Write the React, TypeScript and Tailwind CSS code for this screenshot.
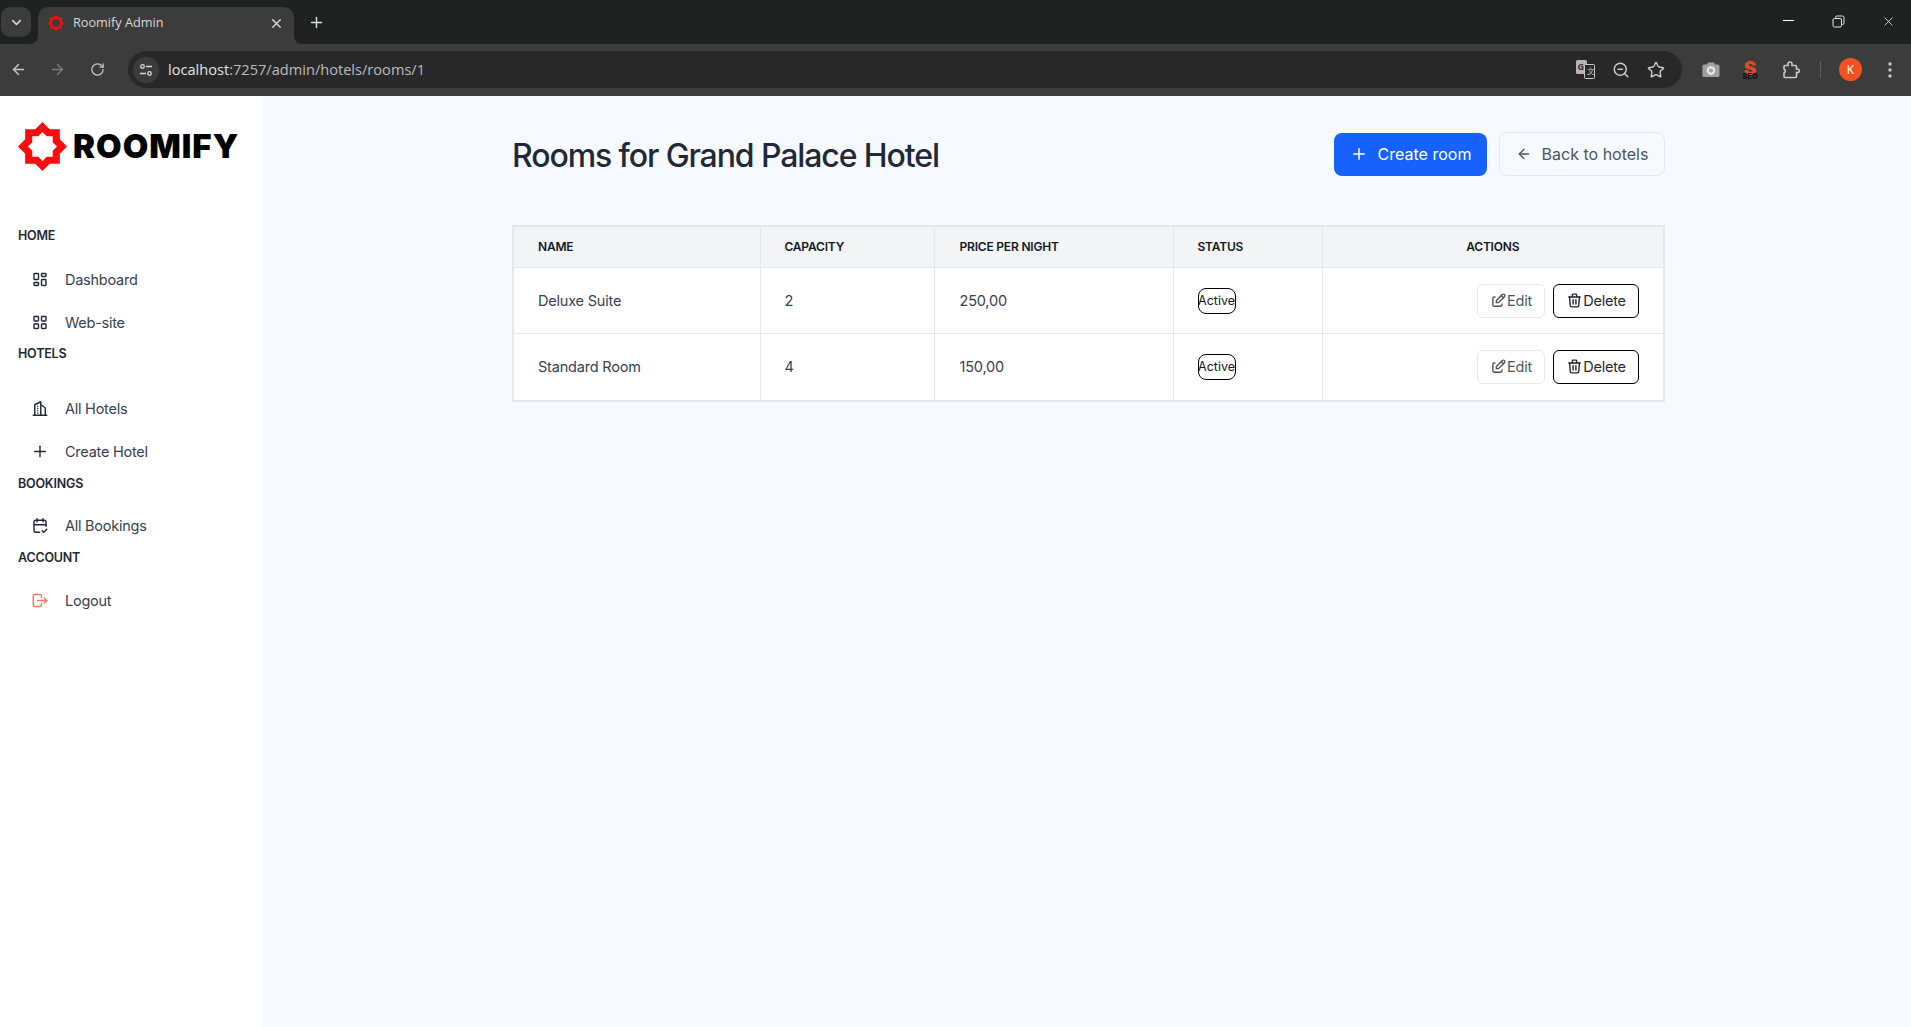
import { ArrowLeft, ArrowRight, ChevronDown, Plus, RotateCw, Star, X, ZoomOut } from "lucide-react";
import { TbLayoutDashboard, TbLayoutGrid, TbBuildingSkyscraper, TbCalendarCheck, TbLogout, TbEdit, TbTrash, TbPlus } from "react-icons/tb";

function starPoints(c: number, outer: number, inner: number) {
  const pts: string[] = [];
  for (let i = 0; i < 16; i++) {
    const r = i % 2 === 0 ? outer : inner;
    const a = (i * Math.PI) / 8 - Math.PI / 2;
    pts.push(`${(c + r * Math.cos(a)).toFixed(2)} ${(c + r * Math.sin(a)).toFixed(2)}`);
  }
  return "M" + pts.join("L") + "Z";
}

function Logo({ size }: { size: number }) {
  return (
    <svg width={size} height={size} viewBox="0 0 48 48" className="shrink-0">
      <path fillRule="evenodd" fill="#fb0d0d" d={starPoints(24, 24, 18.4) + starPoints(24, 14.2, 10.8)} />
    </svg>
  );
}

function Section({ children, className }: { children: string; className: string }) {
  return <div className={`pl-[18px] text-[12.5px] leading-[16px] font-semibold tracking-[-0.2px] text-[#1f2937] ${className}`}>{children}</div>;
}

function Item({ icon, label, className = "" }: { icon: React.ReactNode; label: string; className?: string }) {
  return (
    <div className={`flex h-[43px] items-center pl-[31px] text-[14.5px] tracking-[-0.25px] text-[#374151] ${className}`}>
      <span className="flex w-[18px] justify-center text-[#1f2937]">{icon}</span>
      <span className="ml-[16px]">{label}</span>
    </div>
  );
}

const rows = [
  { name: "Deluxe Suite", cap: "2", price: "250,00", h: "h-[66px]", pt: "pt-[2px]" },
  { name: "Standard Room", cap: "4", price: "150,00", h: "h-[68px]", pt: "pt-[1px]" },
];

const cell = "border border-[#e5e7eb] pl-[24px]";

export default function App() {
  return (
    <div className="flex h-[1027px] w-[1911px] flex-col overflow-hidden bg-[#f6f9fe] font-['Inter',sans-serif]">
      {/* browser chrome */}
      <div className="flex h-[44px] shrink-0 items-end bg-[#202221] font-['Open_Sans',sans-serif] text-white">
        <div className="mb-[7px] ml-[1px] flex h-[30px] w-[30px] items-center justify-center rounded-[9px] bg-[#3c3c3c]">
          <ChevronDown size={15} strokeWidth={2.5} className="text-[#d8d8d8]" />
        </div>
        <div className="relative ml-[7px] flex h-[37px] w-[256px] items-center rounded-t-[10px] bg-[#3c3c3c] pb-[5px] pl-[10px] pr-[10px]">
          <span className="absolute bottom-0 left-[-8px] h-[8px] w-[8px] bg-[#3c3c3c]">
            <span className="block h-[8px] w-[8px] rounded-br-[8px] bg-[#202221]" />
          </span>
          <span className="absolute bottom-0 right-[-8px] h-[8px] w-[8px] bg-[#3c3c3c]">
            <span className="block h-[8px] w-[8px] rounded-bl-[8px] bg-[#202221]" />
          </span>
          <Logo size={16} />
          <span className="ml-[9px] flex-1 text-[12.7px] text-[#d9d9d9]">Roomify Admin</span>
          <X size={15} strokeWidth={2} className="text-[#e0e0e0]" />
        </div>
        <Plus size={17} strokeWidth={2} className="mb-[13px] ml-[14px] text-[#e0e0e0]" />
        <div className="mb-[15px] ml-auto flex items-center">
          <span className="mb-[2px] h-[1px] w-[11px] bg-white" />
          <svg width="13" height="13" viewBox="0 0 13 13" fill="none" stroke="#e6e6e6" className="ml-[38px]">
            <rect x="1" y="3.5" width="8.5" height="8.5" rx="1.5" />
            <path d="M3.5 3V2.5A1.5 1.5 0 0 1 5 1h5.5A1.5 1.5 0 0 1 12 2.5V8a1.5 1.5 0 0 1-1.5 1.5H10" />
          </svg>
          <X size={15} strokeWidth={1.2} className="ml-[36px] mr-[15px] text-white" />
        </div>
      </div>
      <div className="flex h-[52px] shrink-0 items-center bg-[#3c3c3c] pb-[1px] font-['Open_Sans',sans-serif]">
        <ArrowLeft size={17} className="ml-[10px] text-[#c8c8c8]" />
        <ArrowRight size={17} className="ml-[22px] text-[#7c7c7c]" />
        <RotateCw size={15} className="ml-[24px] text-[#c8c8c8]" />
        <div className="ml-[23px] flex h-[37px] w-[1554px] items-center rounded-full bg-[#282828]">
          <span className="ml-[5px] flex h-[26px] w-[26px] items-center justify-center rounded-full bg-[#3c3c3c]">
            <svg width="14" height="14" viewBox="0 0 14 14" fill="none" stroke="#d8d8d8" strokeWidth="1.3">
              <circle cx="3.5" cy="3.5" r="1.8" />
              <circle cx="10.5" cy="10.5" r="1.8" />
              <path d="M7 3.5h6M1 10.5h6" />
            </svg>
          </span>
          <span className="ml-[9px] text-[14.6px] text-[#e4e4e4]">
            localhost<span className="text-[#b9bcc0]">:7257/admin/hotels/rooms/1</span>
          </span>
          <div className="ml-auto flex items-center text-[#c8c8c8]">
            <svg width="19" height="19" viewBox="0 0 19 19">
              <rect x="0" y="0" width="11" height="14" rx="1.5" fill="#b5b5b5" />
              <rect x="8.5" y="4.5" width="10" height="14" rx="1" fill="#282828" stroke="#c8c8c8" />
              <text x="1.5" y="10" fontSize="9" fontWeight="700" fill="#333">G</text>
              <text x="10.5" y="14" fontSize="8" fill="#c8c8c8">文</text>
            </svg>
            <ZoomOut size={18} className="ml-[17px]" />
            <Star size={18} className="ml-[17px] mr-[17px]" />
          </div>
        </div>
        <svg width="18" height="15" viewBox="0 0 18 15" className="ml-[20px]">
          <path fill="#a0a0a0" d="M2 2.5h3L6 .5h6l1 2h3a1.5 1.5 0 0 1 1.5 1.5v9.5A1.5 1.5 0 0 1 16 15H2A1.5 1.5 0 0 1 .5 13.500V4A1.500 1.500 0 0 1 2 2.500Z" />
          <circle cx="9" cy="8.500" r="4.200" fill="#ececec" />
          <circle cx="9" cy="8.500" r="2.200" fill="#a0a0a0" />
        </svg>
        <svg width="18" height="20" viewBox="0 0 18 20" className="ml-[21px] overflow-visible font-['Inter',sans-serif]">
          <text x="9" y="14.500" textAnchor="middle" fontSize="19" fontWeight="900" fill="#e0492c">S</text>
          <text x="9" y="18.500" textAnchor="middle" fontSize="7.500" fontWeight="800" fill="#111">SEO</text>
        </svg>
        <svg width="18" height="18" viewBox="0 0 18 18" fill="none" stroke="#c8c8c8" strokeWidth="1.600" className="ml-[23px]">
          <path d="M3 4.500H6V3a2 2 0 0 1 4 0v1.500h3.500a1 1 0 0 1 1 1V8h1a1.800 1.800 0 0 1 0 3.600h-1v3.900a1 1 0 0 1-1 1H3a1 1 0 0 1-1-1V12a2.200 2.200 0 0 0 0-4V5.500a1 1 0 0 1 1-1Z" />
        </svg>
        <span className="ml-[20px] h-[17px] w-[1px] bg-[#5f5f5f]" />
        <span className="ml-[18px] flex h-[23px] w-[23px] items-center justify-center rounded-full bg-[#f4511e] text-[12px] text-white">K</span>
        <svg width="16" height="16" viewBox="0 0 16 16" fill="#c8c8c8" className="ml-[20px]">
          <circle cx="8" cy="2" r="1.700" />
          <circle cx="8" cy="8" r="1.700" />
          <circle cx="8" cy="14" r="1.700" />
        </svg>
      </div>

      {/* page */}
      <div className="flex min-h-0 flex-1">
        <aside className="w-[262px] shrink-0 bg-white">
          <div className="flex items-center pl-[18px] pt-[26px]">
            <Logo size={49} />
            <span className="ml-[6px] text-[33px] font-black leading-none tracking-[1px] text-black">ROOMIFY</span>
          </div>
          <Section className="mt-[57px]">HOME</Section>
          <Item className="mt-[14px]" label="Dashboard" icon={<TbLayoutDashboard size={25} strokeWidth={1.9} />} />
          <Item label="Web-site" icon={<TbLayoutGrid size={25} strokeWidth={1.9} />} />
          <Section className="mt-[2px]">HOTELS</Section>
          <Item className="mt-[25px]" label="All Hotels" icon={<TbBuildingSkyscraper size={25} strokeWidth={1.9} />} />
          <Item label="Create Hotel" icon={<TbPlus size={25} strokeWidth={1.9} />} />
          <Section className="mt-[3px]">BOOKINGS</Section>
          <Item className="mt-[12px]" label="All Bookings" icon={<TbCalendarCheck size={25} strokeWidth={1.9} />} />
          <Section className="mt-[3px]">ACCOUNT</Section>
          <Item className="mt-[13px]" label="Logout" icon={<TbLogout size={25} strokeWidth={1.9} className="text-[#f87a5c]" />} />
        </aside>

        <main className="min-w-0 flex-1 pl-[250px] pr-[246px] pt-[36px]">
          <div className="flex items-center">
            <h1 className="mb-[-2px] mt-[2px] flex-1 text-[32px] font-medium leading-[44px] tracking-[-1.1px] text-[#1f2937]">Rooms for Grand Palace Hotel</h1>
            <button className="flex h-[43px] w-[153px] items-center justify-center gap-[10px] rounded-[8px] bg-[#1761fd] text-[16px] text-white">
              <Plus size={18} />
              Create room
            </button>
            <button className="ml-[12px] flex h-[44px] w-[166px] items-center justify-center gap-[10px] rounded-[8px] border border-[#e5e7eb] text-[16px] text-[#4b5563]">
              <ArrowLeft size={16} />
              Back to hotels
            </button>
          </div>

          <table className="mt-[49px] w-[1153px] table-fixed border-collapse border-2 border-[#e5e7eb] bg-white text-[14.5px] tracking-[-0.2px] text-[#374151]">
            <colgroup>
              <col className="w-[247px]" />
              <col className="w-[174px]" />
              <col className="w-[239px]" />
              <col className="w-[149px]" />
              <col />
            </colgroup>
            <thead>
              <tr className="h-[41px] bg-[#f3f4f6] text-left text-[12px] font-semibold text-[#111827]">
                <th className={`${cell} font-semibold`}>NAME</th>
                <th className={`${cell} font-semibold`}>CAPACITY</th>
                <th className="border border-[#e5e7eb] pl-[25px] font-semibold">PRICE PER NIGHT</th>
                <th className={`${cell} font-semibold`}>STATUS</th>
                <th className="border border-[#e5e7eb] text-center font-semibold">ACTIONS</th>
              </tr>
            </thead>
            <tbody>
              {rows.map((r) => (
                <tr key={r.name} className={r.h}>
                  <td className={`${cell} ${r.pt}`}>{r.name}</td>
                  <td className={`${cell} ${r.pt}`}>{r.cap}</td>
                  <td className={`border border-[#e5e7eb] pl-[25px] ${r.pt}`}>{r.price}</td>
                  <td className={`${cell} ${r.pt}`}>
                    <span className="flex h-[26px] w-[38px] items-center justify-center rounded-[8px] border border-black text-[12.5px] tracking-normal text-[#111827]">Active</span>
                  </td>
                  <td className={`border border-[#e5e7eb] pr-[24px] ${r.pt}`}>
                    <div className="flex justify-end gap-[8px]">
                      <button className="flex h-[34px] w-[68px] items-center justify-center rounded-[6px] border border-[#e5e7eb] text-[#4b5563]">
                        <TbEdit size={17} className="mb-[2px]" />
                        Edit
                      </button>
                      <button className="flex h-[34px] w-[86px] items-center justify-center rounded-[6px] border border-black text-[#1f2937]">
                        <TbTrash size={17} className="mb-[2px]" />
                        Delete
                      </button>
                    </div>
                  </td>
                </tr>
              ))}
            </tbody>
          </table>
        </main>
      </div>
    </div>
  );
}
